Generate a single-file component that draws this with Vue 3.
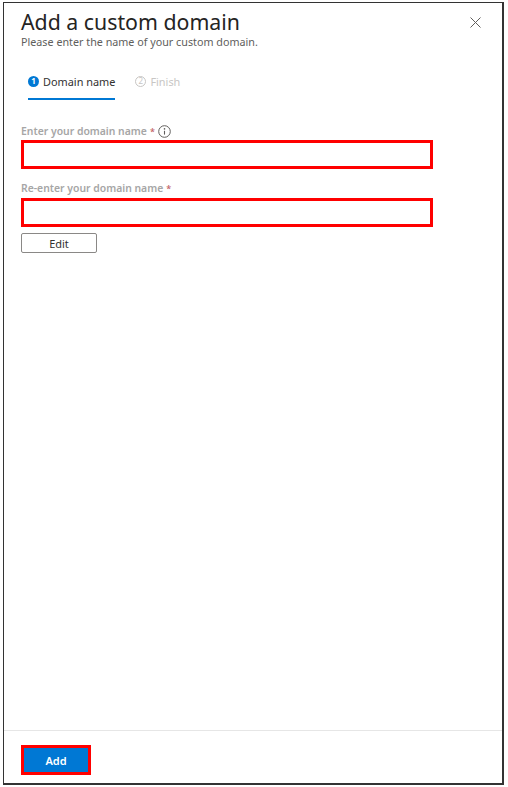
<script setup>
const fields = [
  { label: 'Enter your domain name', info: true },
  { label: 'Re-enter your domain name', info: false },
]
</script>

<template>
  <div class="page">
    <div class="panel">
      <header class="head">
        <div>
          <h1 class="title">Add a custom domain</h1>
          <p class="sub">Please enter the name of your custom domain.</p>
        </div>
        <svg class="close" width="11" height="11" viewBox="0 0 11 11" aria-hidden="true">
          <path d="M.5.5l10 10M10.5.5l-10 10" stroke="#605e5c" stroke-width="1" fill="none" />
        </svg>
      </header>

      <nav class="steps">
        <div class="step active">
          <span class="dot">1</span>
          <span>Domain name</span>
        </div>
        <div class="step muted">
          <span class="dot2">2</span>
          <span>Finish</span>
        </div>
      </nav>

      <form class="form" @submit.prevent>
        <div v-for="f in fields" :key="f.label" class="field">
          <div class="label">
            <span>{{ f.label }}</span>
            <span class="req">*</span>
            <svg v-if="f.info" class="info" width="13" height="13" viewBox="0 0 13 13" aria-hidden="true">
              <circle cx="6.5" cy="6.5" r="5.8" fill="none" stroke="#605e5c" stroke-width="1" />
              <path d="M6.5 5.8v3.8" stroke="#605e5c" stroke-width="1.1" />
              <circle cx="6.5" cy="3.9" r=".8" fill="#605e5c" />
            </svg>
          </div>
          <div class="input"></div>
        </div>
        <button type="button" class="edit">Edit</button>
      </form>

      <footer class="foot">
        <button type="button" class="add">Add</button>
      </footer>
    </div>
  </div>
</template>

<style scoped>
.page {
  width: 508px;
  height: 787px;
  padding: 2px 4px 2px 3px;
  box-sizing: border-box;
  background: #fff;
  font-family: "Noto Sans", "Open Sans", sans-serif;
}
.panel {
  height: 100%;
  box-sizing: border-box;
  border: 1px solid #333;
  border-width: 1px 2px 2px 1px;
  display: flex;
  flex-direction: column;
}
.head {
  display: flex;
  justify-content: space-between;
  align-items: flex-start;
  padding: 5px 21px 0 17px;
}
.close {
  margin-top: 9px;
}
.title {
  margin: 0;
  font-size: 21.3px;
  line-height: 27px;
  font-weight: 400;
  color: #252423;
}
.sub {
  margin: 0;
  font-size: 10.75px;
  line-height: 14px;
  color: #605e5c;
}
.steps {
  display: flex;
  margin: 15px 0 0 24px;
  gap: 20px;
}
.step {
  display: flex;
  align-items: center;
  gap: 4px;
  height: 36px;
  box-sizing: border-box;
  font-size: 10.9px;
  color: #323130;
}
.step.active {
  border-bottom: 2px solid #0078d4;
}
.step.muted {
  color: #c8c6c4;
  padding-bottom: 2px;
}
.dot, .dot2 {
  width: 11px;
  height: 11px;
  border-radius: 50%;
  display: flex;
  align-items: center;
  justify-content: center;
  font-size: 8px;
  line-height: 1;
  box-sizing: border-box;
}
.dot {
  background: #0078d4;
  color: #fff;
  font-weight: 700;
}
.dot2 {
  border: 1px solid #c8c6c4;
}
.form {
  padding: 0 0 0 17px;
  margin-top: 23px;
}
.field + .field {
  margin-top: 11px;
}
.label {
  display: flex;
  align-items: center;
  gap: 3px;
  height: 16px;
  font-size: 10.4px;
  font-weight: 600;
  color: #a6a6a6;
}
.req {
  color: #c4686c;
  font-size: 9px;
}
.info {
  margin-left: 0;
}
.input {
  width: 412px;
  height: 29px;
  box-sizing: border-box;
  border: 3px solid #ff0000;
  margin-top: 1px;
}
.field + .field .input {
  margin-top: 2px;
}
.edit {
  display: block;
  width: 76px;
  height: 20px;
  padding: 0;
  margin-top: 6px;
  border: 1px solid #8a8886;
  border-radius: 2px;
  background: #fff;
  font: 400 11px "Noto Sans", sans-serif;
  color: #323130;
}
.foot {
  margin-top: auto;
  height: 53px;
  box-sizing: border-box;
  border-top: 1px solid #e6e6e6;
  padding: 14px 0 0 17px;
}
.add {
  display: block;
  width: 70px;
  height: 30px;
  padding: 0;
  box-sizing: border-box;
  border: 3px solid #ff0000;
  background: #0078d4;
  color: #fff;
  font: 600 11px "Noto Sans", sans-serif;
}
</style>
